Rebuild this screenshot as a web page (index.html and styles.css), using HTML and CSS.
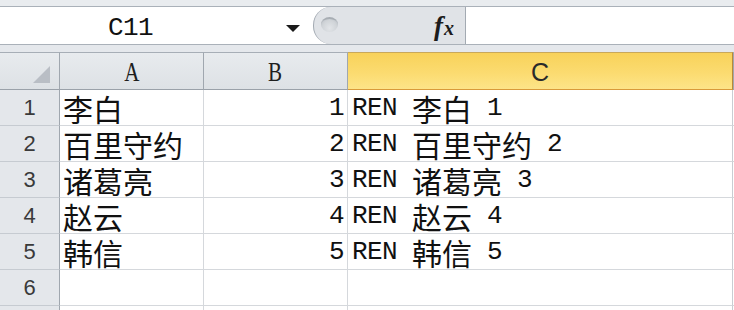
FILE: index.html
```html
<!DOCTYPE html>
<html lang="zh">
<head>
<meta charset="utf-8">
<title>Sheet</title>
<link rel="stylesheet" href="styles.css">
</head>
<body>
<div class="app">
  <div class="fbar">
    <div class="strip"></div>
    <div class="frow">
      <div class="namebox"><span class="ref lat">C11</span><span class="arrow"></span></div>
      <div class="pill"><span class="handle"></span><span class="fx"><i class="f">f</i><i class="x">x</i></span></div>
      <div class="finput"></div>
    </div>
    <div class="band"></div>
  </div>
  <div class="sheet">
    <div class="hd corner"><svg class="tri" width="17" height="17" viewBox="0 0 17 17"><polygon points="17,0 17,17 0,17" fill="#b9bec5"/></svg></div>
    <div class="hd col"><span class="hl">A</span></div>
    <div class="hd col"><span class="hl">B</span></div>
    <div class="hd col sel">C</div>
    <div class="hd col rest"></div>

    <div class="rh">1</div>
    <div class="c ca">李白</div>
    <div class="c cb"><span class="lat">1</span></div>
    <div class="c cc"><span class="lat">REN </span>李白<span class="lat"> 1</span></div>
    <div class="c cd"></div>

    <div class="rh">2</div>
    <div class="c ca">百里守约</div>
    <div class="c cb"><span class="lat">2</span></div>
    <div class="c cc"><span class="lat">REN </span>百里守约<span class="lat"> 2</span></div>
    <div class="c cd"></div>

    <div class="rh">3</div>
    <div class="c ca">诸葛亮</div>
    <div class="c cb"><span class="lat">3</span></div>
    <div class="c cc"><span class="lat">REN </span>诸葛亮<span class="lat"> 3</span></div>
    <div class="c cd"></div>

    <div class="rh">4</div>
    <div class="c ca">赵云</div>
    <div class="c cb"><span class="lat">4</span></div>
    <div class="c cc"><span class="lat">REN </span>赵云<span class="lat"> 4</span></div>
    <div class="c cd"></div>

    <div class="rh">5</div>
    <div class="c ca">韩信</div>
    <div class="c cb"><span class="lat">5</span></div>
    <div class="c cc"><span class="lat">REN </span>韩信<span class="lat"> 5</span></div>
    <div class="c cd"></div>

    <div class="rh">6</div>
    <div class="c ca"></div>
    <div class="c cb"></div>
    <div class="c cc"></div>
    <div class="c cd"></div>

    <div class="rh last"></div>
    <div class="c ca last"></div>
    <div class="c cb last"></div>
    <div class="c cc last"></div>
    <div class="c cd last"></div>
  </div>
</div>
</body>
</html>
```

FILE: styles.css
```css
* { box-sizing: border-box; margin: 0; padding: 0; }
html, body { width: 734px; height: 310px; overflow: hidden; background: #fff; }
body { font-family: "Liberation Sans", sans-serif; color: #111; }

.app { display: flex; flex-direction: column; width: 734px; height: 310px; overflow: hidden; }

.lat {
  font-family: "Liberation Mono", monospace;
  font-size: 26px;
  letter-spacing: -0.6px;
  white-space: pre;
}

/* formula bar */
.fbar { display: flex; flex-direction: column; background: #e4e7eb; flex: none; }
.strip { height: 6px; background: #e9ecef; }
.frow {
  display: flex;
  height: 39px;
  background: #fff;
  border-top: 1px solid #aab1b9;
  border-bottom: 1px solid #aab1b9;
}
.namebox {
  width: 313px;
  display: flex;
  align-items: center;
  padding-left: 108px;
  padding-right: 13px;
}
.namebox .ref { padding-top: 5px; color: #111; }
.arrow {
  margin-left: auto;
  margin-top: 6px;
  width: 0;
  height: 0;
  border-left: 7px solid transparent;
  border-right: 7px solid transparent;
  border-top: 7px solid #1a1a1a;
}
.pill {
  width: 153px;
  display: flex;
  align-items: center;
  justify-content: space-between;
  padding: 0 11px 0 7px;
  background: #e0e3e7;
  border-left: 1px solid #a3aab2;
  border-right: 1px solid #a3aab2;
  border-radius: 18px 0 0 18px;
}
.handle {
  width: 17px;
  height: 15px;
  border-radius: 50%;
  background: radial-gradient(ellipse at 50% 70%, #e2e5e8 0%, #d0d4d8 60%, #b5bac0 100%);
  border-top: 2px solid #a7adb3;
  margin-top: -2px;
}
.fx {
  font-family: "Liberation Serif", serif;
  font-weight: bold;
  color: #1c1c1c;
  display: flex;
  align-items: baseline;
  padding-top: 2px;
}
.fx .f { font-size: 27px; }
.fx .x { font-size: 20px; margin-left: 1px; }
.finput { flex: 1; background: #fff; }
.band { height: 7px; background: #e5e8ec; }

/* sheet */
.sheet {
  flex: 1;
  min-height: 0;
  overflow: hidden;
  display: grid;
  grid-template-columns: 60px 144px 144px 385px 1fr;
  grid-template-rows: 38px repeat(6, 36px) 1fr;
}
.hd {
  background: linear-gradient(#e8ebee, #dde1e5);
  border-top: 1px solid #a7aeb6;
  border-right: 1px solid #a0a7af;
  border-bottom: 1px solid #9aa1a9;
  display: flex;
  align-items: center;
  justify-content: center;
}
.corner {
  justify-content: flex-end;
  align-items: flex-end;
  padding: 0 9px 6px 0;
}
.col {
  font-family: "Liberation Serif", serif;
  font-size: 27px;
  color: #1e1e1e;
  padding-top: 2px;
}
.hl { display: inline-block; transform: scaleX(0.78); }
.col.sel {
  font-family: "Liberation Sans", sans-serif;
  font-size: 25px;
  color: #2a2a2a;
  background: linear-gradient(#f8d25a, #fbdb70 55%, #fde488);
  border-top-color: #c9a85a;
  border-right: 1px solid #b88a3a;
  border-bottom: 1px solid #d99a3a;
}
.rh {
  background: #e4e7eb;
  border-right: 1px solid #a0a7af;
  border-bottom: 1px solid #c6cbd1;
  display: flex;
  align-items: center;
  justify-content: center;
  font-family: "Liberation Sans", sans-serif;
  font-size: 22px;
  color: #3a3a3a;
  padding-top: 1px;
}
.c {
  border-right: 1px solid #d5d8dc;
  border-bottom: 1px solid #d5d8dc;
  display: flex;
  align-items: center;
  font-family: "Noto Sans CJK SC", sans-serif;
  font-size: 30px;
  line-height: 34px;
  white-space: pre;
  color: #111;
}
.ca { padding-left: 3px; }
.cb { justify-content: flex-end; padding-right: 3px; }
.cc { padding-left: 4px; border-right-color: #c9cdd2; }
.cd { border-right: none; }
.last { border-bottom: none; }
```
